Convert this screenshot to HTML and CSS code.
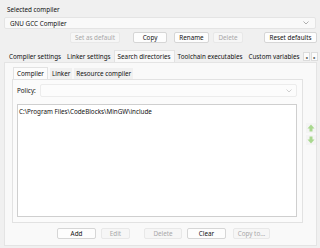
FILE: index.html
```html
<!DOCTYPE html>
<html lang="en">
<head>
  <meta charset="UTF-8">
  <title>Compiler settings</title>
  <link rel="stylesheet" href="styles.css">
</head>
<body>

  <div class="dialog">
    <div class="label">Selected compiler</div>
    <div class="combo main-combo">
      <span>GNU GCC Compiler</span>
      <svg class="chev" width="6" height="4" viewBox="0 0 6 4"><path d="M0.5 0.5 L3 3 L5.5 0.5" fill="none" stroke="#9a9a9a" stroke-width="0.8"/></svg>
    </div>

    <div class="btn-row">
      <button class="btn disabled w-set">Set as default</button>
      <button class="btn w-copy">Copy</button>
      <button class="btn w-rename">Rename</button>
      <button class="btn disabled w-delete">Delete</button>
      <button class="btn w-reset">Reset defaults</button>
    </div>

    <div class="tabs">
      <div class="tab first">Compiler settings</div>
      <div class="tab">Linker settings</div>
      <div class="tab active">Search directories</div>
      <div class="tab">Toolchain executables</div>
      <div class="tab clip">Custom variables</div>
      <div class="scroll-arrows">
        <span class="sa">&#9666;</span>
        <span class="sa">&#9656;</span>
      </div>
    </div>

    <div class="panel">
      <div class="panel-main">
        <div class="sub-area">
          <div class="subtabs">
            <div class="subtab active">Compiler</div>
            <div class="subtab">Linker</div>
            <div class="subtab">Resource compiler</div>
          </div>
          <div class="subpanel">
            <div class="policy-row">
              <span class="policy-label">Policy:</span>
              <div class="combo policy-combo">
                <span></span>
                <svg class="chev" width="6" height="4" viewBox="0 0 6 4"><path d="M0.5 0.5 L3 3 L5.5 0.5" fill="none" stroke="#c4c4c4" stroke-width="0.8"/></svg>
              </div>
            </div>
            <div class="list">
              <div class="list-item">C:\Program Files\CodeBlocks\MinGW\include</div>
            </div>
          </div>
        </div>
        <div class="updown">
          <div class="arrow-btn">
            <svg width="8" height="8" viewBox="0 0 8 8"><path d="M4 0.5 L7.5 4.5 L5.5 4.5 L5.5 7.5 L2.5 7.5 L2.5 4.5 L0.5 4.5 Z" fill="#a9d88f"/></svg>
          </div>
          <div class="arrow-btn">
            <svg width="8" height="8" viewBox="0 0 8 8"><path d="M4 7.5 L7.5 3.5 L5.5 3.5 L5.5 0.5 L2.5 0.5 L2.5 3.5 L0.5 3.5 Z" fill="#a9d88f"/></svg>
          </div>
        </div>
      </div>

      <div class="bottom-row">
        <button class="btn w-add">Add</button>
        <button class="btn disabled w-edit">Edit</button>
        <button class="btn disabled w-del">Delete</button>
        <button class="btn w-clear">Clear</button>
        <button class="btn disabled w-copyto">Copy to...</button>
      </div>
    </div>
  </div>

</body>
</html>
```

FILE: styles.css
```css
body {
  margin: 0;
  width: 320px;
  height: 248px;
  overflow: hidden;
  background-color: #f0f0f0;
  font-family: "Noto Sans", "DejaVu Sans", sans-serif;
  font-size: 6.3px;
  color: #111;
}

.dialog {
  padding: 5px 2px 0 4px;
  display: flex;
  flex-direction: column;
}

.label {
  height: 10px;
  line-height: 10px;
  padding-left: 3px;
}

.combo {
  display: flex;
  align-items: center;
  justify-content: space-between;
  background-color: #f9f9f9;
  border: 1px solid #e4e4e4;
  border-radius: 2px;
  box-sizing: border-box;
}

.main-combo {
  margin-top: 2px;
  margin-right: 2px;
  height: 12px;
  padding: 0 6px 0 5px;
}

.btn-row {
  display: flex;
  margin-top: 3px;
  height: 11px;
}

.btn {
  font-family: inherit;
  font-size: 6.3px;
  color: #111;
  background-color: #fdfdfd;
  border: 1px solid #d6d6d6;
  border-radius: 2px;
  padding: 0;
  height: 11px;
  line-height: 9px;
  box-sizing: border-box;
}

.btn.disabled {
  color: #a8a8a8;
  background-color: #f6f6f6;
  border-color: #e8e8e8;
}

.w-set { width: 50px; margin-left: 66px; }
.w-copy { width: 34px; margin-left: 13px; }
.w-rename { width: 35px; margin-left: 7px; }
.w-delete { width: 30px; margin-left: 4px; }
.w-reset { width: 53px; margin-left: 21px; }

.tabs {
  display: flex;
  margin-top: 7px;
  height: 12px;
  align-items: flex-end;
}

.tab {
  height: 11px;
  line-height: 11px;
  padding: 0 3px;
  background-color: #f0f0f0;
  white-space: nowrap;
  flex-shrink: 0;
}

.tab.first {
  margin-left: 2px;
}

.tab.active {
  height: 12px;
  line-height: 12px;
  background-color: #f9f9f9;
  border: 1px solid #e2e2e2;
  border-bottom: none;
  box-sizing: border-box;
}

.tab.clip {
  flex: 1 1 0;
  min-width: 0;
  overflow: hidden;
  padding-right: 0;
}

.scroll-arrows {
  display: flex;
  gap: 1px;
  margin-left: 1px;
  margin-bottom: 1px;
  flex-shrink: 0;
}

.sa {
  width: 7px;
  height: 9px;
  line-height: 9px;
  font-size: 4px;
  text-align: center;
  background-color: #fbfbfb;
  border: 1px solid #dcdcdc;
  box-sizing: border-box;
}

.panel {
  background-color: #f9f9f9;
  border: 1px solid #e4e4e4;
  height: 184px;
  box-sizing: border-box;
  margin-right: 1px;
  padding: 4px 0 0 7px;
  display: flex;
  flex-direction: column;
}

.panel-main {
  display: flex;
}

.sub-area {
  width: 291px;
  display: flex;
  flex-direction: column;
}

.subtabs {
  display: flex;
  height: 12px;
  align-items: flex-end;
  padding-left: 1px;
}

.subtab {
  height: 11px;
  line-height: 11px;
  padding: 0 2px;
  margin-right: 2px;
  background-color: #f0f0f0;
}

.subtab.active {
  height: 12px;
  line-height: 12px;
  padding: 0 3px;
  background-color: #fcfcfc;
  border: 1px solid #e2e2e2;
  border-bottom: none;
  box-sizing: border-box;
}

.subpanel {
  height: 144px;
  background-color: #fbfbfb;
  border: 1px solid #e2e2e2;
  box-sizing: border-box;
  padding: 4px 5px 0 4px;
}

.policy-row {
  display: flex;
  align-items: center;
  height: 13px;
}

.policy-label {
  width: 23px;
}

.policy-combo {
  flex: 1;
  height: 13px;
  padding: 0 4px;
  background-color: #fcfcfc;
  border-color: #ececec;
}

.list {
  margin-top: 7px;
  height: 113px;
  background-color: #ffffff;
  border: 1px solid #cfcfcf;
  box-sizing: border-box;
  padding: 2px 1px;
}

.list-item {
  line-height: 10px;
  white-space: nowrap;
}

.updown {
  display: flex;
  flex-direction: column;
  gap: 2px;
  margin-top: 56px;
  margin-left: 3px;
}

.arrow-btn {
  width: 10px;
  height: 10px;
  display: flex;
  align-items: center;
  justify-content: center;
  background-color: #f4f4f4;
}

.bottom-row {
  display: flex;
  margin-top: 5px;
}

.w-add { width: 39px; margin-left: 45px; }
.w-edit { width: 29px; margin-left: 5px; }
.w-del { width: 38px; margin-left: 14px; }
.w-clear { width: 39px; margin-left: 5px; }
.w-copyto { width: 37px; margin-left: 7px; }
```
